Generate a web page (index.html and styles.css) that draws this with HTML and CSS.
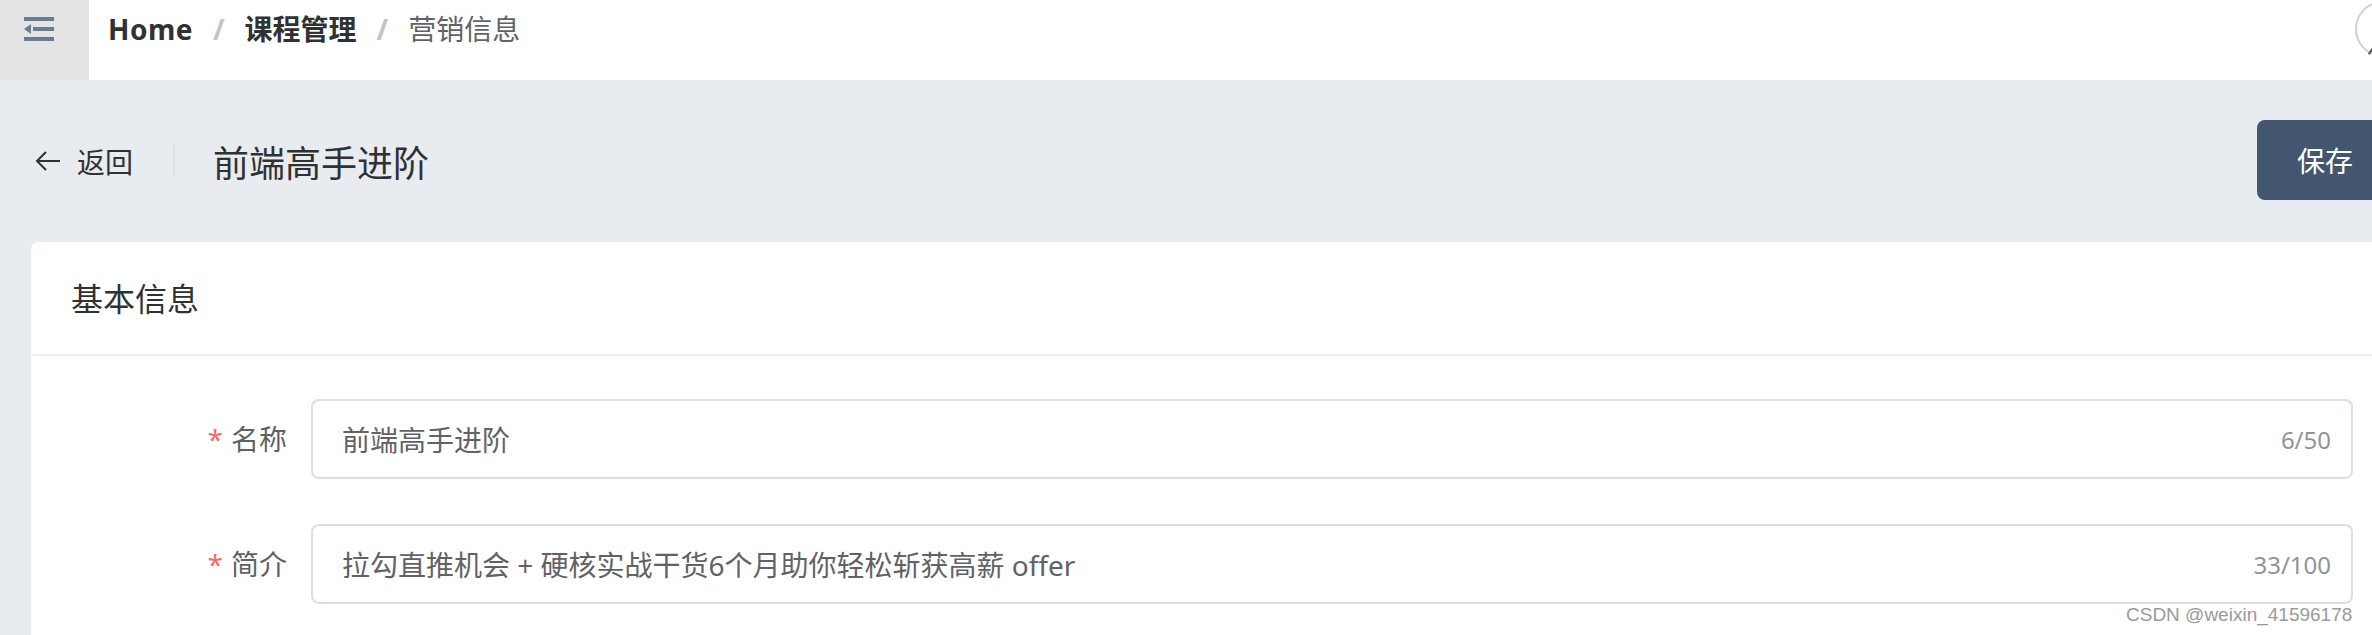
FILE: index.html
```html
<!DOCTYPE html>
<html lang="zh-CN">
<head>
    <meta charset="UTF-8">
    <meta name="viewport" content="width=device-width, initial-scale=1.0">
    <title>营销信息</title>
    <link rel="stylesheet" href="styles.css">
</head>
<body>
    <div class="app">
        <div class="navbar">
            <div class="hamburger">
                <svg width="30" height="24" viewBox="0 0 30 24">
                    <rect x="0" y="0" width="30" height="4" fill="#6b7b90"/>
                    <rect x="9" y="10" width="21" height="4" fill="#6b7b90"/>
                    <polygon points="0,12 7,7 7,17" fill="#6b7b90"/>
                    <rect x="0" y="20" width="30" height="4" fill="#6b7b90"/>
                </svg>
            </div>
            <div class="breadcrumb">
                <span class="crumb">Home</span>
                <span class="sep">/</span>
                <span class="crumb">课程管理</span>
                <span class="sep">/</span>
                <span class="crumb crumb-last">营销信息</span>
            </div>
            <div class="avatar"><span class="avatar-mark"></span></div>
        </div>

        <div class="main">
            <div class="page-head">
                <div class="back">
                    <svg width="26" height="22" viewBox="0 0 26 22">
                        <path d="M11 2 L2 11 L11 20 M2 11 H25" fill="none" stroke="#303133" stroke-width="2"/>
                    </svg>
                    <span>返回</span>
                </div>
                <div class="divider"></div>
                <div class="page-title">前端高手进阶</div>
                <button class="btn-save">保存</button>
            </div>

            <div class="card">
                <div class="card-header">基本信息</div>
                <div class="card-body">
                    <div class="form-item">
                        <label class="form-label"><span class="required">*</span>名称</label>
                        <div class="input">
                            <span class="input-text">前端高手进阶</span>
                            <span class="input-count">6/50</span>
                        </div>
                    </div>
                    <div class="form-item">
                        <label class="form-label"><span class="required">*</span>简介</label>
                        <div class="input">
                            <span class="input-text">拉勾直推机会 + 硬核实战干货6个月助你轻松斩获高薪 offer</span>
                            <span class="input-count">33/100</span>
                        </div>
                    </div>
                </div>
            </div>
        </div>

        <div class="watermark">CSDN @weixin_41596178</div>
    </div>
</body>
</html>
```

FILE: styles.css
```css
body {
    margin: 0;
    height: 635px;
    overflow: hidden;
    background-color: #e8ecf0;
    font-family: 'Noto Sans', 'Noto Sans CJK SC', sans-serif;
    color: #303133;
}
.app {
    width: 2424px;
    position: relative;
    height: 635px;
    overflow: hidden;
}

/* barra superior */
.navbar {
    height: 80px;
    background-color: #fff;
    display: flex;
    align-items: flex-start;
}
.hamburger {
    width: 89px;
    height: 80px;
    box-sizing: border-box;
    padding: 17px 0 0 24px;
    background-color: #e4e4e4;
}
.hamburger svg {
    display: block;
}
.breadcrumb {
    margin-left: 19px;
    height: 58px;
    line-height: 58px;
    font-size: 28px;
    display: flex;
}
.crumb {
    font-weight: 700;
    color: #303133;
}
.crumb:first-child {
    letter-spacing: 0.5px;
}
.crumb-last {
    font-weight: 400;
    color: #606266;
}
.sep {
    margin: 0 20px;
    font-weight: 700;
    color: #c0c4cc;
}
.avatar {
    margin-left: auto;
    margin-right: 13px;
    margin-top: 1px;
    width: 52px;
    height: 52px;
    border: 2px solid #cfcfcf;
    border-radius: 50%;
    background-color: #fff;
    position: relative;
}
.avatar-mark {
    position: absolute;
    left: 13px;
    top: 44px;
    width: 2px;
    height: 8px;
    background-color: #555;
    transform: rotate(35deg);
}

/* conteudo */
.main {
    padding: 0 31px;
}
.page-head {
    height: 162px;
    display: flex;
    align-items: center;
}
.back {
    display: flex;
    align-items: center;
    gap: 16px;
    padding-left: 4px;
    font-size: 28px;
    color: #303133;
}
.back svg {
    display: block;
}
.divider {
    width: 2px;
    height: 32px;
    background-color: #dcdfe6;
    margin: 0 38px 0 40px;
}
.page-title {
    font-size: 36px;
    color: #303133;
}
.btn-save {
    margin-left: auto;
    height: 80px;
    padding: 0 40px;
    border: none;
    border-radius: 8px;
    background-color: #42566f;
    color: #fff;
    font-family: 'Noto Sans', 'Noto Sans CJK SC', sans-serif;
    font-size: 28px;
    margin-top: -2px;
}

.card {
    background-color: #fff;
    border-radius: 8px;
    height: 430px;
}
.card-header {
    padding: 36px 40px 34px;
    font-size: 32px;
    line-height: 42px;
    border-bottom: 2px solid #ebeef5;
    color: #303133;
}
.card-body {
    padding: 43px 40px 0;
}
.form-item {
    display: flex;
    margin-bottom: 45px;
}
.form-item:last-child {
    margin-bottom: 0;
}
.form-label {
    width: 240px;
    box-sizing: border-box;
    padding-right: 24px;
    text-align: right;
    line-height: 80px;
    font-size: 28px;
    color: #606266;
}
.required {
    color: #f56c6c;
    margin-right: 8px;
}
.input {
    flex: 1;
    height: 80px;
    box-sizing: border-box;
    border: 2px solid #dcdfe6;
    border-radius: 8px;
    padding: 0 20px 0 29px;
    display: flex;
    align-items: center;
}
.input-text {
    font-size: 28px;
    color: #606266;
}
.input-count {
    margin-left: auto;
    font-size: 24px;
    color: #909399;
}

.watermark {
    position: absolute;
    left: 2126px;
    top: 602px;
    font-family: 'Liberation Sans', sans-serif;
    font-size: 19px;
    line-height: 26px;
    color: #9a9a9a;
    text-shadow: 0 0 2px #fff, 0 0 2px #fff;
}
```
